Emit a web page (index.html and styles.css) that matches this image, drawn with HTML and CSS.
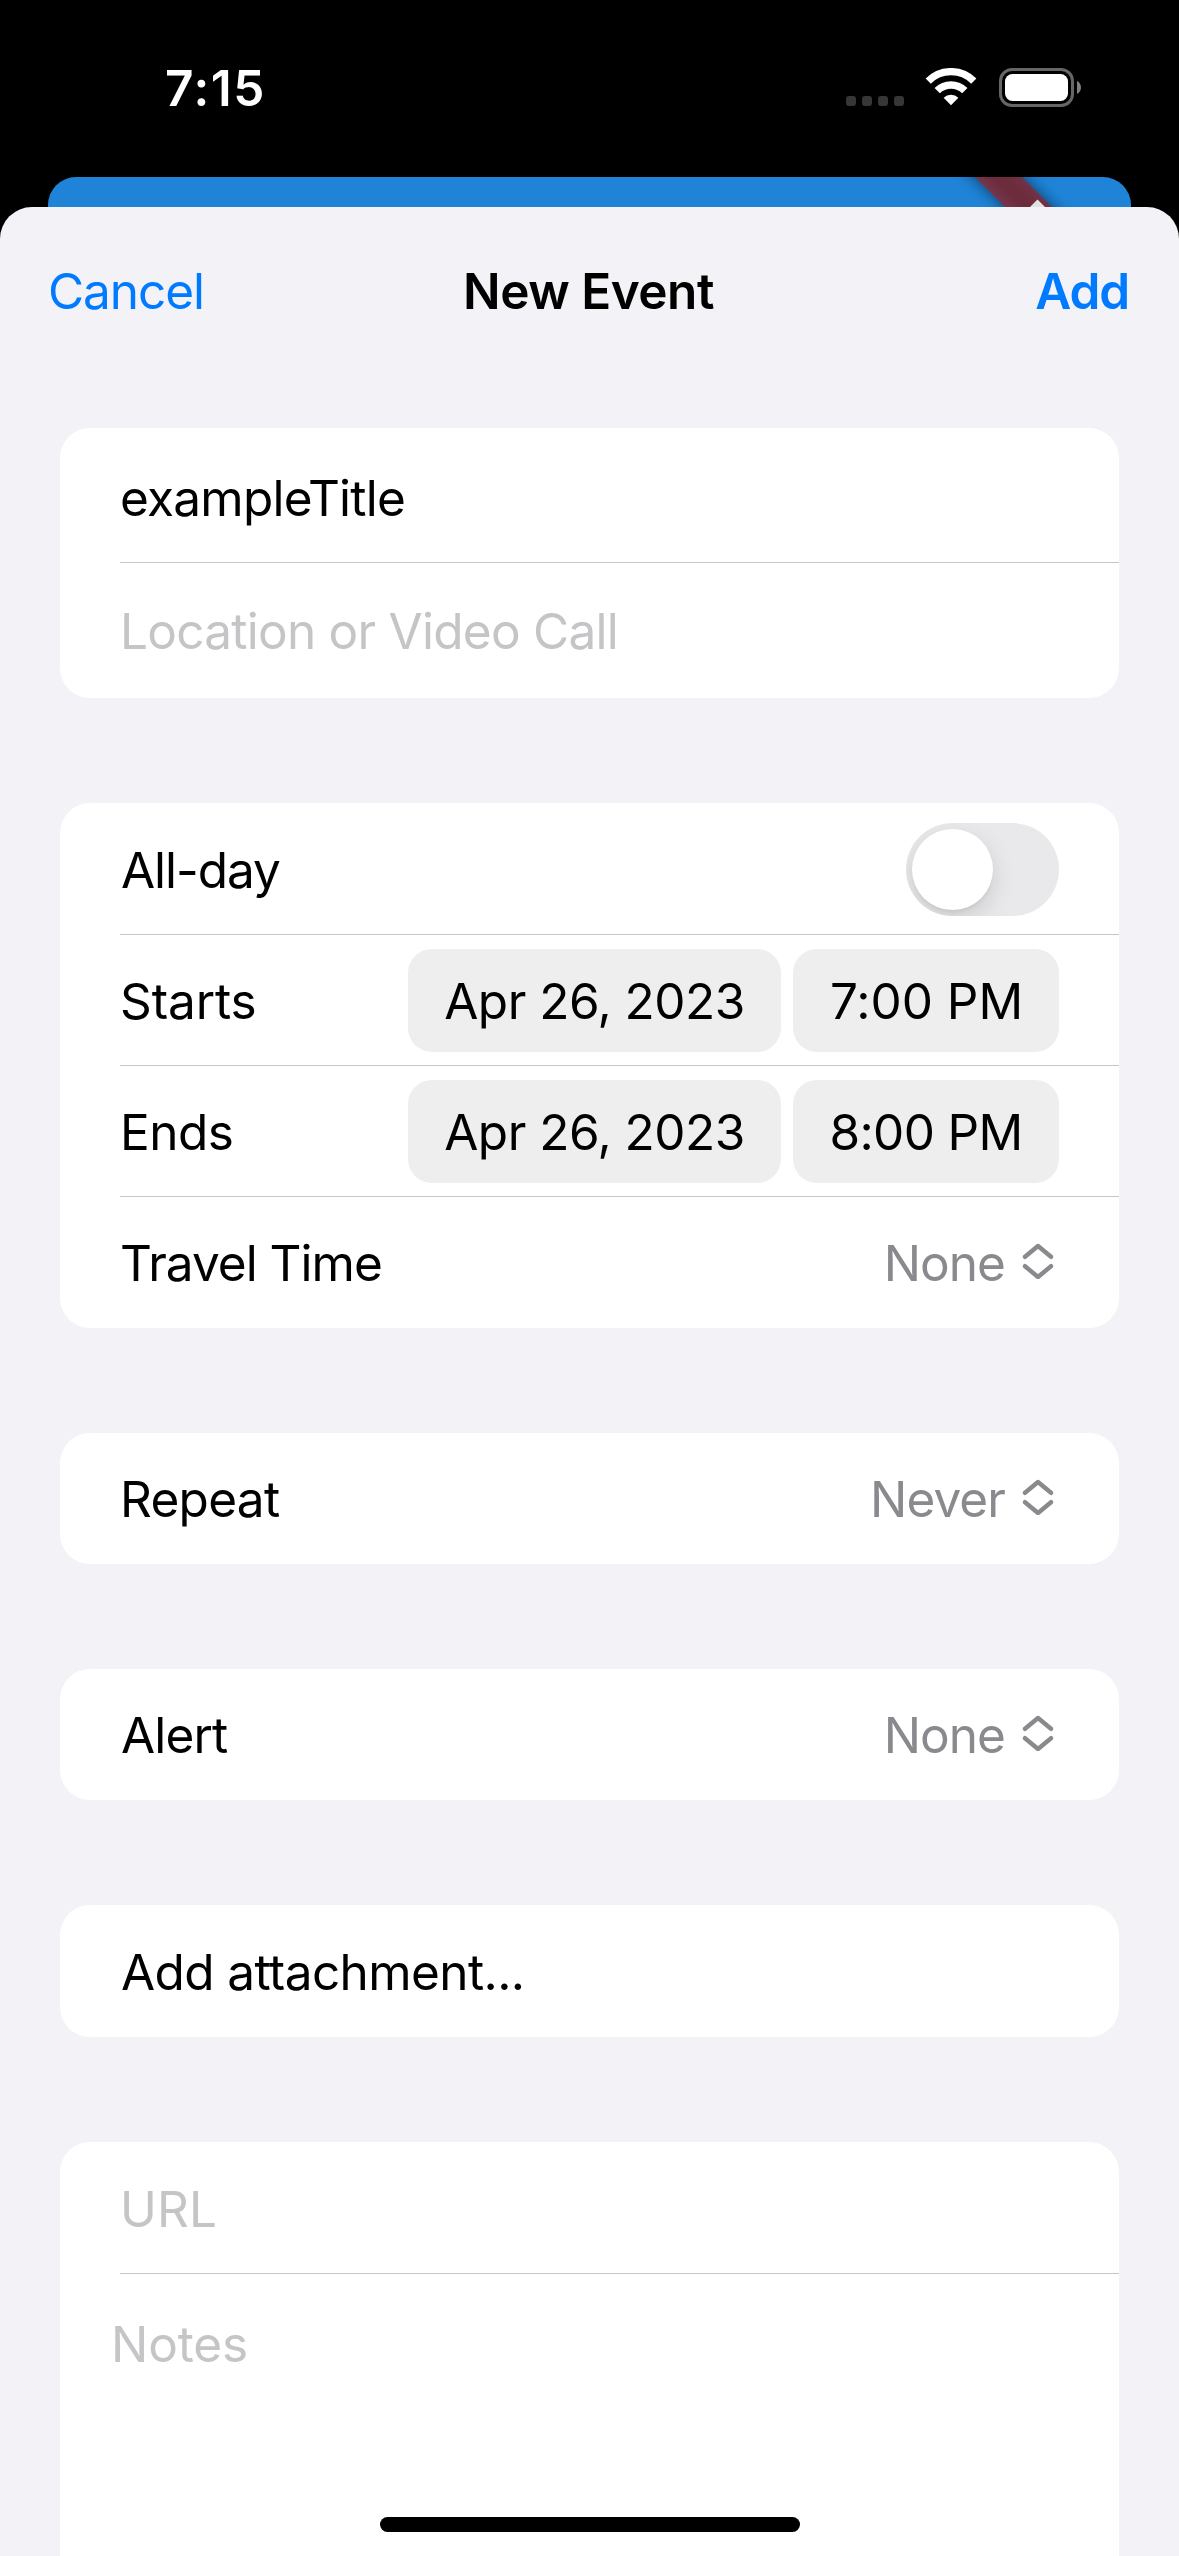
FILE: index.html
```html
<!DOCTYPE html>
<html lang="en">
<head>
<meta charset="utf-8">
<title>New Event</title>
<link rel="stylesheet" href="styles.css">
</head>
<body>
<div class="screen">
  <header class="status">
    <span class="clock">7:15</span>
    <div class="status-icons">
      <div class="dots"><i></i><i></i><i></i><i></i></div>
      <svg class="wifi" width="52" height="38" viewBox="0 0 52 38">
        <path d="M2.3 12.7A33.4 33.4 0 0 1 49.7 12.7" transform="translate(1.02 .9) scale(.961)" fill="none" stroke="#fff" stroke-width="7.6"/>
        <path d="M12.2 22.7A19.5 19.5 0 0 1 39.8 22.7" fill="none" stroke="#fff" stroke-width="7.5"/>
        <path d="M26 37.2L18.6 29.8A10.6 10.6 0 0 1 33.4 29.8Z" fill="#fff"/>
      </svg>
      <div class="battery"><div class="battery-fill"></div></div>
      <svg class="battery-cap" width="4" height="13" viewBox="0 0 4 13"><path d="M0 0C5.3 2.3 5.3 10.7 0 13Z" fill="#808080"/></svg>
    </div>
  </header>

  <div class="app-behind">
    <svg class="ribbon" width="1083" height="30" viewBox="0 0 1083 30">
      <defs>
        <linearGradient id="rib" gradientUnits="userSpaceOnUse" x1="939" y1="12" x2="963" y2="-12">
          <stop offset="0" stop-color="#75374e"/><stop offset=".35" stop-color="#6c2c3c"/><stop offset=".65" stop-color="#6c2c3c"/><stop offset="1" stop-color="#733349"/>
        </linearGradient>
        <filter id="soft" x="-50%" y="-100%" width="200%" height="300%"><feGaussianBlur stdDeviation="8"/></filter>
      </defs>
      <path d="M887 -40H934L1044 70H997Z" fill="#000" opacity=".55" filter="url(#soft)"/>
      <path d="M887 -40H934L1044 70H997Z" fill="url(#rib)"/>
      <path d="M989.5 22.5L997.5 30.5H981.5Z" fill="#e2e2e2"/>
    </svg>
  </div>

  <main class="sheet">
    <nav class="bar">
      <span class="cancel">Cancel</span>
      <span class="title">New Event</span>
      <span class="add">Add</span>
    </nav>

    <section class="card">
      <div class="row row-title"><span class="text t-example">exampleTitle</span></div>
      <div class="row row-location"><span class="text hint t-location">Location or Video Call</span></div>
    </section>

    <section class="card">
      <div class="row row-first"><span class="text t-allday">All-day</span><div class="switch"><div class="knob"></div></div></div>
      <div class="row"><span class="text t-starts">Starts</span><div class="pills"><span class="pill date">Apr 26, 2023</span><span class="pill time t-seven">7:00 PM</span></div></div>
      <div class="row"><span class="text t-ends">Ends</span><div class="pills"><span class="pill date">Apr 26, 2023</span><span class="pill time t-eight">8:00 PM</span></div></div>
      <div class="row"><span class="text t-travel">Travel Time</span><span class="value">None</span><svg class="chev" width="32" height="36" viewBox="0 0 32 36"><path d="M3 13.8L16 3L29 13.8M3 23.2L16 34L29 23.2"/></svg></div>
    </section>

    <section class="card">
      <div class="row"><span class="text">Repeat</span><span class="value">Never</span><svg class="chev" width="32" height="36" viewBox="0 0 32 36"><path d="M3 13.8L16 3L29 13.8M3 23.2L16 34L29 23.2"/></svg></div>
    </section>

    <section class="card">
      <div class="row"><span class="text t-alert">Alert</span><span class="value">None</span><svg class="chev" width="32" height="36" viewBox="0 0 32 36"><path d="M3 13.8L16 3L29 13.8M3 23.2L16 34L29 23.2"/></svg></div>
    </section>

    <section class="card">
      <div class="row row-first"><span class="text t-attach">Add attachment...</span></div>
    </section>

    <section class="card card-last">
      <div class="row row-first"><span class="text hint t-url">URL</span></div>
      <div class="row row-notes"><span class="text hint t-notes">Notes</span></div>
    </section>
  </main>
  <div class="home"></div>
</div>
</body>
</html>
```
FILE: styles.css
```css
* { box-sizing: border-box; }

body { margin: 0; background: #000; }

.screen {
  position: relative;
  display: flex;
  flex-direction: column;
  width: 1179px;
  height: 2556px;
  overflow: hidden;
  background: #000;
  color: #000;
  font: 400 49.5px/60px Inter, "Liberation Sans", sans-serif;
  letter-spacing: -0.7px;
  white-space: nowrap;
}

/* Status bar */
.status {
  display: flex;
  flex: none;
  justify-content: space-between;
  height: 177px;
  padding: 58px 98px 0 165px;
}
.clock { color: #fff; font-weight: 600; letter-spacing: 1.6px; }
.status-icons { display: flex; align-items: flex-start; padding-top: 10px; }
.dots { display: flex; gap: 6px; margin: 28px 21px 0 0; }
.dots i { width: 10px; height: 10px; border-radius: 3px; background: #363636; }
.wifi { margin-right: 22px; }
.battery {
  width: 75px;
  height: 39px;
  padding: 3px;
  border: 3px solid #666;
  border-radius: 13px;
}
.battery-fill { height: 27px; border-radius: 7.5px; background: #fff; }
.battery-cap { margin: 13px 0 0 3px; }

/* App showing behind the sheet */
.app-behind {
  flex: none;
  height: 30px;
  margin: 0 48px;
  overflow: hidden;
  border-radius: 28px 28px 0 0;
  background: #1f84d8;
}
.ribbon { display: block; }

/* Sheet */
.sheet {
  flex: 1;
  min-height: 0;
  display: flex;
  flex-direction: column;
  gap: 105px;
  border-radius: 32px 32px 0 0;
  background: #f2f2f7;
}
.bar {
  display: grid;
  flex: none;
  grid-template-columns: 1fr auto 1fr;
  height: 116px;
  padding: 54px 50px 0 48px;
}
.cancel { color: #007aff; letter-spacing: -1.05px; }
.title { font-weight: 600; letter-spacing: -0.5px; }
.add { justify-self: end; color: #007aff; font-weight: 600; letter-spacing: -1.1px; }

/* Grouped cards */
.card {
  flex: none;
  margin: 0 60px;
  border-radius: 30px;
  background: #fff;
}
.sheet > .bar + .card { margin-top: 0; }
.card-last { height: 500px; }
.row {
  display: flex;
  align-items: flex-start;
  height: 131px;
  margin-left: 60px;
  padding-right: 60px;
  border-bottom: 1px solid #c6c6c8;
}
.row:last-child { border-bottom: 0; }
.text { flex: 1; padding-top: 36px; }
.hint { color: #c5c5c7; }
.value { margin-right: 17px; padding-top: 36px; color: #8a8a8e; letter-spacing: -0.93px; }

.row-first { height: 132px; }
.row-first .text { padding-top: 37px; }
.row-title, .row-location { height: 135px; }
.row-title .text { padding-top: 40px; }
.row-location .text { padding-top: 38px; }
.row-notes { margin-left: 51px; }
.row-notes .text { padding-top: 40px; }

.t-example { letter-spacing: -0.76px; }
.t-location { letter-spacing: -0.74px; }
.t-allday { padding-left: 1px; letter-spacing: -1.05px; }
.t-starts { letter-spacing: -0.12px; }
.t-ends { letter-spacing: -0.5px; }
.t-travel { letter-spacing: -0.98px; }
.t-alert { padding-left: 1px; letter-spacing: -0.85px; }
.t-attach { padding-left: 1px; letter-spacing: -0.6px; }
.t-url { letter-spacing: 0.15px; }
.t-notes { letter-spacing: -0.14px; }

/* Controls */
.switch {
  width: 153px;
  height: 93px;
  margin-top: 20px;
  padding: 6px;
  overflow: hidden;
  border-radius: 47px;
  background: #e9e9eb;
}
.knob {
  width: 81px;
  height: 81px;
  border-radius: 50%;
  background: #fff;
  box-shadow: 0 9px 24px rgba(0, 0, 0, 0.13), 0 3px 3px rgba(0, 0, 0, 0.04);
}
.pills { display: flex; gap: 12px; margin-top: 14px; }
.pill {
  height: 103px;
  padding-top: 22px;
  border-radius: 24px;
  background: #eeeeef;
  text-align: center;
}
.date { width: 373px; letter-spacing: -0.5px; }
.time { width: 266px; }
.t-seven { padding-left: 1px; letter-spacing: -0.02px; }
.t-eight { letter-spacing: -0.65px; }
.chev {
  margin: 46px 5px 0 0;
  fill: none;
  stroke: #8a8a8e;
  stroke-width: 4.4;
  stroke-linecap: round;
  stroke-linejoin: round;
}

.home {
  position: absolute;
  left: 380px;
  top: 2517px;
  width: 420px;
  height: 15px;
  border-radius: 8px;
  background: #000;
}
```
